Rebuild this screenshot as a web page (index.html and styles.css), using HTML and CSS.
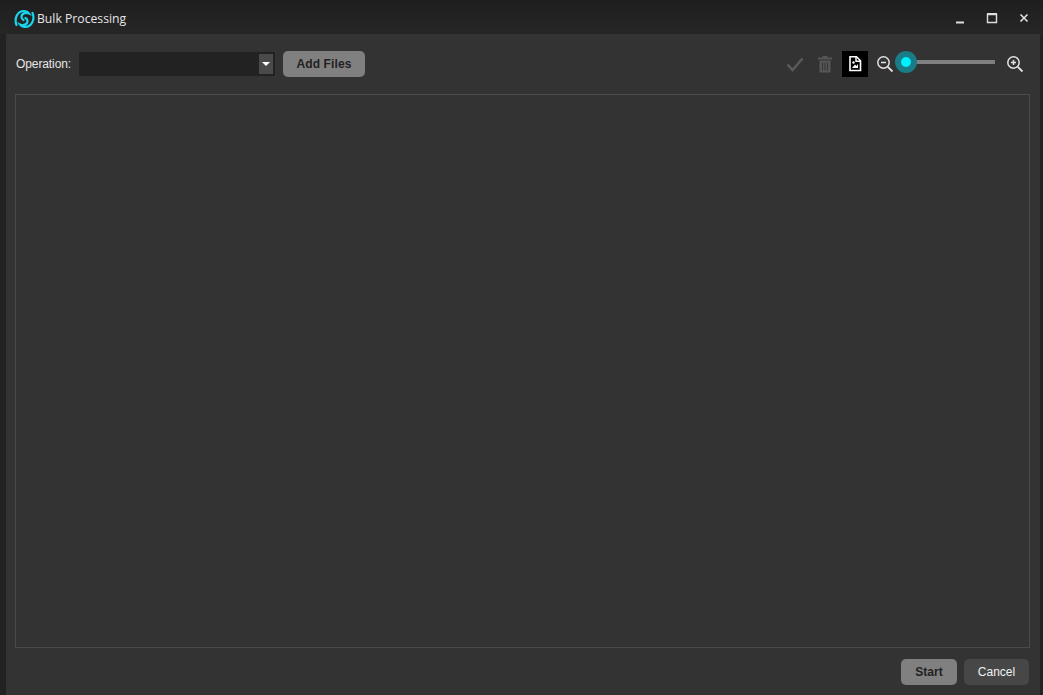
FILE: index.html
```html
<!DOCTYPE html>
<html lang="en">
<head>
<meta charset="utf-8">
<title>Bulk Processing</title>
<link rel="stylesheet" href="styles.css">
</head>
<body>
<div class="window">
  <header class="titlebar">
    <svg class="logo" width="22" height="22" viewBox="0 0 22 22">
      <path d="M3.500 18C1 12 4 4 11 4 13.500 4 15 5 16 6.500 12.500 5 8.500 6.500 8.500 10 8.500 11.500 9.300 12.500 10.500 13" fill="none" stroke="#17d5ec" stroke-width="2.200" stroke-linecap="round"/>
      <path d="M19.500 6C22 12 19 20 12 20 9.500 20 8 19 7 17.500 10.500 19 14.500 17.500 14.500 14 14.500 12.500 13.700 11.500 12.500 11" fill="none" stroke="#17d5ec" stroke-width="2.200" stroke-linecap="round"/>
    </svg>
    <span class="title">Bulk Processing</span>
    <div class="winctl">
      <svg width="32" height="18" viewBox="0 0 32 18"><path d="M12 14.500h8" stroke="#ddd" stroke-width="2"/></svg>
      <svg width="32" height="18" viewBox="0 0 32 18"><path d="M11.500 6.500h9v8h-9z" fill="none" stroke="#ddd" stroke-width="1.400"/><path d="M11 6h10" stroke="#ddd" stroke-width="2"/></svg>
      <svg width="32" height="18" viewBox="0 0 32 18"><path d="M12.500 6.500l7 7M19.500 6.500l-7 7" stroke="#ddd" stroke-width="1.700"/></svg>
    </div>
  </header>
  <main class="panel">
    <div class="toolbar">
      <label class="oplabel">Operation:</label>
      <div class="select"><span class="arrowbox"><span class="arrow"></span></span></div>
      <button class="btn btn-disabled btn-add">Add Files</button>
      <div class="tools">
        <svg class="tool" width="30" height="26" viewBox="0 0 30 26"><path d="M7.500 13.500l5 5.500 10-11.500" fill="none" stroke="#5a5a5a" stroke-width="2.500"/></svg>
        <svg class="tool" width="30" height="26" viewBox="0 0 30 26"><path d="M8 6.500h14v2H8zM12.500 5h5v2h-5zM9.500 9.500h11v12h-11z" fill="#565656"/><path d="M12.500 11.500v8M15 11.500v8M17.500 11.500v8" stroke="#333" stroke-width="1"/></svg>
        <div class="tool-active">
          <svg class="doc" width="26" height="26" viewBox="0 0 26 26"><path d="M8 5.800h6.500l4 4v9.700H8z" fill="none" stroke="#fff" stroke-width="1.600"/><path d="M14 5.800v4.500h4.500" fill="none" stroke="#fff" stroke-width="1.400"/><path d="M10 17l3-3.500 1.500 1.500 1.500-2v4z" fill="#fff"/><circle cx="11.500" cy="11.500" r="1.200" fill="#fff"/></svg>
        </div>
        <svg class="zoom-icon" width="18" height="18" viewBox="0 0 18 18"><circle cx="7.500" cy="7.500" r="5.700" fill="none" stroke="#e4e4e4" stroke-width="1.500"/><path d="M11.800 11.800l4.700 4.700" stroke="#e4e4e4" stroke-width="1.800"/><path d="M5 7.500h5" stroke="#e4e4e4" stroke-width="1.500"/></svg>
        <div class="slider"><span class="track"></span><span class="halo"></span><span class="thumb"></span></div>
        <svg class="zoom-icon" width="18" height="18" viewBox="0 0 18 18"><circle cx="7.500" cy="7.500" r="5.700" fill="none" stroke="#e4e4e4" stroke-width="1.500"/><path d="M11.800 11.800l4.700 4.700" stroke="#e4e4e4" stroke-width="1.800"/><path d="M5 7.500h5M7.500 5v5" stroke="#e4e4e4" stroke-width="1.500"/></svg>
      </div>
    </div>
    <div class="filearea"></div>
    <footer class="footer">
      <button class="btn btn-disabled btn-start">Start</button>
      <button class="btn btn-cancel">Cancel</button>
    </footer>
  </main>
</div>
</body>
</html>
```
FILE: styles.css
```css
* { box-sizing: border-box; }
html, body { margin: 0; height: 100%; }
body { background: #222222; font-family: "Liberation Sans", Arial, sans-serif; overflow: hidden; }
.window { width: 1043px; height: 695px; display: flex; flex-direction: column; background: #222222; padding: 0 3px 0 6px; }
.titlebar { height: 34px; flex: none; display: flex; align-items: center; margin: 0 -3px 0 -6px; padding: 0 3px 0 13px; color: #e6e6e6; font-family: "Open Sans", sans-serif; font-size: 12.200px; background: linear-gradient(#1e1e1e, #262626); }
.logo { margin-right: 2px; margin-top: 1px; }
.title { position: relative; top: 1px; }
.winctl { margin-left: auto; display: flex; }
.panel { flex: 1; min-height: 0; background: #333333; display: flex; flex-direction: column; padding: 0 10px 10px 9px; }
.toolbar { height: 60px; flex: none; display: flex; align-items: center; }
.oplabel { color: #e6e6e6; font-size: 12px; letter-spacing: -.1px; margin-left: 1px; width: 63px; }
.select { width: 196px; height: 24px; background: #222222; display: flex; justify-content: flex-end; align-items: center; padding-right: 2px; }
.arrowbox { width: 14px; height: 20px; background: #4a4a4a; display: flex; align-items: center; justify-content: center; }
.arrow { width: 0; height: 0; border: 4px solid transparent; border-top: 4px solid #fff; border-bottom: 0; }
.btn { border: 0; border-radius: 5px; font-family: "Liberation Sans", Arial, sans-serif; font-size: 12px; padding: 0; }
.btn-disabled { background: #808080; color: #222222; font-weight: bold; }
.btn-add { width: 82px; height: 26px; margin-left: 8px; letter-spacing: .1px; }
.tools { margin-left: auto; display: flex; align-items: center; margin-right: 7px; }
.tool { display: block; }
.tool-active { width: 26px; height: 26px; background: #000; margin-left: 2px; }
.doc { display: block; }
.zoom-icon { display: block; margin-left: 8px; }
.tools .zoom-icon:last-child { margin-left: 11px; margin-right: -1px; }
.slider { position: relative; width: 100px; height: 22px; margin-left: 1px; margin-bottom: 4px; }
.track { position: absolute; left: 11px; right: 0; top: 9px; height: 4px; background: #808080; }
.halo { position: absolute; left: 0; top: 0; width: 22px; height: 22px; border-radius: 50%; background: #1a7c86; }
.thumb { position: absolute; left: 6px; top: 6px; width: 10px; height: 10px; border-radius: 50%; background: #00f0ff; }
.filearea { flex: 1; min-height: 0; border: 1px solid #4a4a4a; }
.footer { flex: none; height: 37px; display: flex; justify-content: flex-end; align-items: flex-end; gap: 7px; margin-right: 1px; }
.btn-start { width: 56px; height: 26px; }
.btn-cancel { width: 65px; height: 26px; background: #474747; color: #f0f0f0; }
```
